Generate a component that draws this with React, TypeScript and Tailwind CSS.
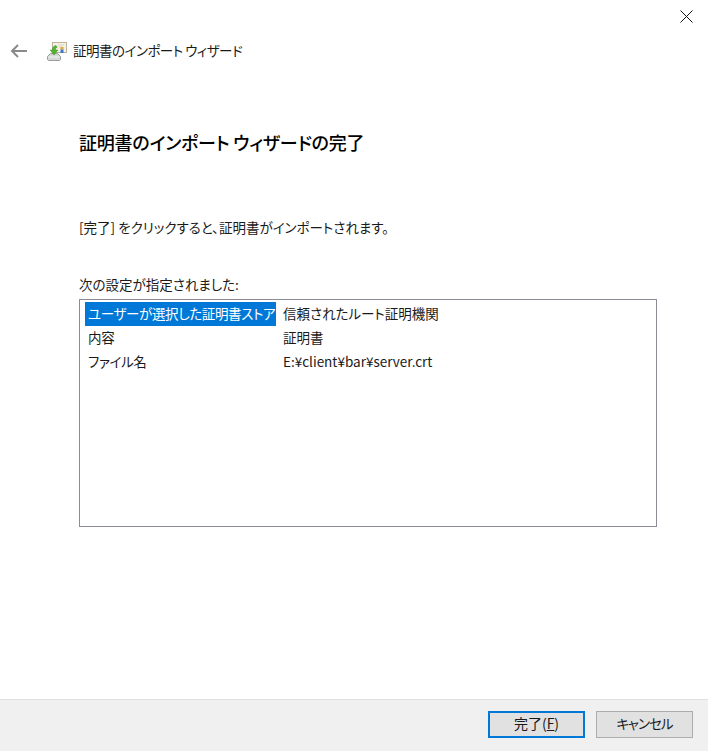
const FONT = "font-['Noto_Sans_CJK_JP','Liberation_Sans',sans-serif] [font-feature-settings:'palt']";

function WizardIcon() {
  return (
    <svg width="20" height="20" viewBox="0 0 20 20" className="shrink-0">
      <rect x="5.5" y="1.5" width="14" height="10" fill="#f6f1e6" stroke="#bdb29c" />
      <path d="M11 4h6M12 6h3" stroke="#dcd4c2" />
      <rect x="13.5" y="6" width="3" height="2.5" fill="#e3a437" />
      <rect x="13.5" y="8.5" width="3" height="3.5" fill="#3f78c8" />
      <path d="M0.5 15.5l3-3h7l3 3v3l-1 1H1.5l-1-1z" fill="#d4d8d6" stroke="#838b88" strokeWidth="0.8" />
      <path d="M1.5 16h11" stroke="#f4f6f5" />
      <path d="M9 4.5C6.5 5 5.5 6.5 5.5 9H3.2L7 14l3.8-5H8.4C8.4 7.5 8.8 6.8 10.2 6.2z" fill="#55b32f" stroke="#37901f" strokeWidth="0.5" />
    </svg>
  );
}

const ROWS = [
  { name: "ユーザーが選択した証明書ストア", value: "信頼されたルート証明機関", selected: true },
  { name: "内容", value: "証明書", selected: false },
  { name: "ファイル名", value: "E:¥client¥bar¥server.crt", selected: false },
];

export default function App() {
  return (
    <div className={`${FONT} flex h-[751px] w-[708px] flex-col bg-white text-[#1a1a1a]`}>
      <div className="flex h-8 justify-end">
        <button type="button" className="mr-[16px] mt-[10px] h-3 w-3 text-black">
          <svg width="13" height="13" viewBox="0 0 13 13">
            <path d="M0.5 0.5l12 12M12.5 0.5l-12 12" stroke="#111" strokeWidth="1" fill="none" />
          </svg>
        </button>
      </div>

      <div className="flex h-[38px] items-center pl-[10px]">
        <svg width="18" height="14" viewBox="0 0 18 14" className="shrink-0">
          <path d="M8 1L2 7l6 6M2 7h15" stroke="#8a8a8a" strokeWidth="2" fill="none" />
        </svg>
        <div className="ml-[19px] flex items-center gap-[6px]">
          <WizardIcon />
          <span className="pb-[2px] text-[13.5px] tracking-[-0.5px]">証明書のインポート ウィザード</span>
        </div>
      </div>

      <div className="flex flex-1 flex-col pl-[79px]">
        <h1 className="mt-[58px] text-[18px] font-medium leading-[28px] tracking-[-0.2px] text-black">
          証明書のインポート ウィザードの完了
        </h1>
        <p className="mt-[61px] text-[13.5px] leading-5">
          [完了] をクリックすると、証明書がインポートされます。
        </p>
        <p className="mt-[37px] text-[13.5px] leading-5">次の設定が指定されました:</p>

        <div className="mt-[5px] h-[228px] w-[578px] border border-[#8c8c96] pl-[5px] pt-[2px]">
          {ROWS.map((row) => (
            <div key={row.name} className="flex h-6 items-start text-[13.5px] leading-[22px]">
              <div
                className={`h-[24px] w-[191px] whitespace-nowrap pl-[3px] tracking-[-0.35px] ${
                  row.selected ? "bg-[#0078d7] text-white" : ""
                }`}
              >
                {row.name}
              </div>
              <div className="pl-[7px]">{row.value}</div>
            </div>
          ))}
        </div>
      </div>

      <div className="flex h-[52px] items-center justify-end gap-[11px] border-t border-[#dfdfdf] bg-[#f0f0f0] pb-[2px] pr-[15px]">
        <button
          type="button"
          className="h-[27px] w-[97px] border-2 border-[#0078d7] bg-[#e1e1e1] pb-[2px] text-[14px]"
        >
          完了(<span className="underline">F</span>)
        </button>
        <button
          type="button"
          className="h-[27px] w-[97px] border border-[#adadad] bg-[#e1e1e1] pb-[2px] text-[13.5px] tracking-[-1px]"
        >
          キャンセル
        </button>
      </div>
    </div>
  );
}
